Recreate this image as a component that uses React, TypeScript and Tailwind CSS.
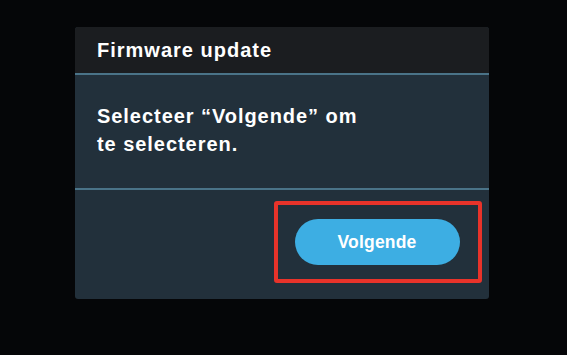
import React from "react";

const App = () => {
  return (
    <div className="h-[355px] w-full bg-[#050608] pl-[75px] pt-[27px] font-['Liberation_Sans',Arial,sans-serif]">
      <div className="w-[414px] h-[272px] rounded-[3px] overflow-hidden bg-[#22303b] flex flex-col">
        {/* Header */}
        <div className="h-[46px] bg-[#1b1d20] flex items-center pl-[22px]">
          <h1 className="text-[20px] font-bold text-white tracking-[1px]">Firmware update</h1>
        </div>
        <div className="h-[2px] bg-[#4a7388]" />

        {/* Body */}
        <div className="h-[113px] pl-[22px] pt-[27px]">
          <p className="text-[20px] leading-[28px] font-bold text-white tracking-[0.95px]">
            Selecteer “Volgende” om
            <br />
            te selecteren.
          </p>
        </div>
        <div className="h-[2px] bg-[#4a7388]" />

        {/* Footer */}
        <div className="flex-1 flex justify-end items-start pt-[11px] pr-[7px]">
          <div className="w-[208px] h-[82px] border-4 border-[#e8332a] rounded-[3px] flex items-center justify-center pr-[2px]">
            <button className="w-[165px] h-[46px] rounded-full bg-[#3daee3] text-white text-[17.5px] font-bold tracking-[0.2px]">
              Volgende
            </button>
          </div>
        </div>
      </div>
    </div>
  );
};

export default App;
